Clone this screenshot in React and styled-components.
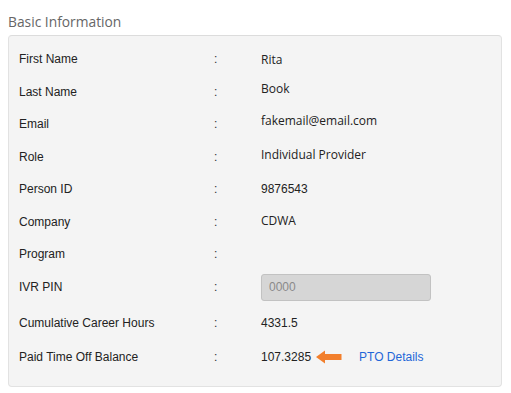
import React from "react";
import styled, { createGlobalStyle } from "styled-components";

const Global = createGlobalStyle`
  html, body { margin: 0; padding: 0; background: #ffffff; }
  body { padding: 8px; font-family: "Liberation Sans", Arial, sans-serif; }
`;

const Title = styled.h3`
  margin: 0;
  height: 27px;
  display: flex;
  align-items: center;
  font-family: "Open Sans", "Noto Sans", sans-serif;
  font-weight: 400;
  font-size: 13.8px;
  color: #666;
`;

const Panel = styled.div`
  width: 494px;
  box-sizing: border-box;
  background: #f4f4f4;
  border: 1px solid #e2e2e2;
  border-top-color: #dcdcdc;
  border-radius: 4px;
  padding: 7px 0 15px 10px;
`;

const Row = styled.div`
  display: grid;
  grid-template-columns: 195px 47px 1fr;
  align-items: center;
  height: ${(p) => p.$h || 32.5}px;
`;

const Label = styled.div`
  font-family: "Liberation Sans", Arial, sans-serif;
  font-size: 12px;
  color: #222;
`;

const Colon = styled.div`
  font-family: "Liberation Sans", Arial, sans-serif;
  font-size: 12px;
  color: #333;
`;

const Value = styled.div`
  display: flex;
  align-items: center;
  font-family: ${(p) =>
    p.$sans ? `"Open Sans", "Noto Sans", sans-serif` : `"Liberation Sans", Arial, sans-serif`};
  font-size: 12px;
  color: #222;
  padding-bottom: ${(p) => p.$raise || 0}px;
`;

const PinBox = styled.div`
  width: 170px;
  height: 27px;
  box-sizing: border-box;
  background: #d6d6d6;
  border: 1px solid #c2c2c2;
  border-radius: 3px;
  display: flex;
  align-items: center;
  padding-left: 7px;
  font-family: "Liberation Sans", Arial, sans-serif;
  font-size: 12px;
  color: #8a8a8a;
`;

const Arrow = styled.svg`
  margin-left: 5px;
  flex: none;
`;

const Link = styled.a`
  margin-left: 17px;
  font-family: "Liberation Sans", Arial, sans-serif;
  font-size: 12px;
  color: #1f67d8;
  text-decoration: none;
  cursor: pointer;
`;

const rows = [
  { label: "First Name", value: "Rita", sans: true },
  { label: "Last Name", value: "Book", sans: true, raise: 7 },
  { label: "Email", value: "fakemail@email.com", sans: true, raise: 7 },
  { label: "Role", value: "Individual Provider", sans: true, raise: 4 },
  { label: "Person ID", value: "9876543" },
  { label: "Company", value: "CDWA", sans: true, raise: 2 },
  { label: "Program", value: "" },
];

export default function App() {
  return (
    <>
      <Global />
      <Title>Basic Information</Title>
      <Panel>
        {rows.map((r) => (
          <Row key={r.label}>
            <Label>{r.label}</Label>
            <Colon>:</Colon>
            <Value $sans={r.sans} $raise={r.raise}>{r.value}</Value>
          </Row>
        ))}
        <Row $h={33}>
          <Label>IVR PIN</Label>
          <Colon>:</Colon>
          <Value>
            <PinBox>0000</PinBox>
          </Value>
        </Row>
        <Row $h={39}>
          <Label>Cumulative Career Hours</Label>
          <Colon>:</Colon>
          <Value>4331.5</Value>
        </Row>
        <Row $h={28}>
          <Label>Paid Time Off Balance</Label>
          <Colon>:</Colon>
          <Value>
            107.3285
            <Arrow width="26" height="14" viewBox="0 0 26 14">
              <path d="M0 7 L9 0.5 L9 4 L25.5 4 L25.5 10 L9 10 L9 13.5 Z" fill="#f27f2c" />
            </Arrow>
            <Link>PTO Details</Link>
          </Value>
        </Row>
      </Panel>
    </>
  );
}
